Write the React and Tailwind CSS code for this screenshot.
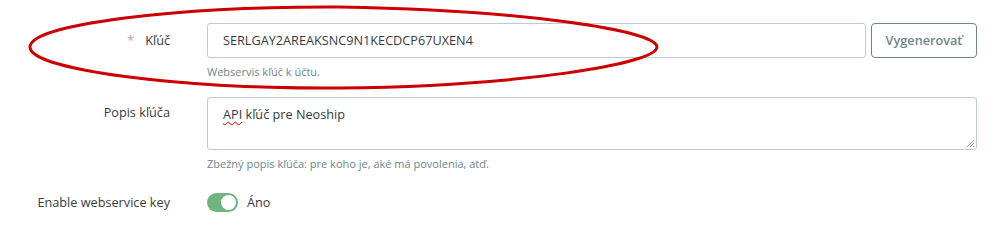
export default function App() {
  return (
    <div
      className="relative h-[226px] w-[1000px] overflow-hidden bg-white text-[12.7px] text-[#363a41]"
      style={{ fontFamily: '"Open Sans", "Noto Sans", sans-serif' }}
    >
      <div className="flex flex-col pt-[23px]">
        {/* Kľúč */}
        <div className="flex">
          <div className="flex h-[35px] w-[170px] items-center justify-end">
            <span className="mr-[11px] text-[#e08f95]">*</span>
            <span>Kľúč</span>
          </div>
          <div className="ml-[37px] w-[770px]">
            <div className="flex">
              <div className="flex h-[35px] flex-1 items-center rounded-[3px] border border-[#bbcdd2] px-[15px]">
                SERLGAY2AREAKSNC9N1KECDCP67UXEN4
              </div>
              <button className="ml-[5px] h-[35px] w-[106px] rounded-[4px] border border-[#6c868e] text-[12.7px] font-semibold text-[#6c868e]">
                Vygenerovať
              </button>
            </div>
            <div className="mt-[6px] text-[11px] text-[#6c868e]">Webservis kľúč k účtu.</div>
          </div>
        </div>

        {/* Popis kľúča */}
        <div className="mt-[16px] flex">
          <div className="flex w-[170px] justify-end pt-[6px]">Popis kľúča</div>
          <div className="ml-[37px] w-[770px]">
            <div className="relative h-[53px] rounded-[3px] border border-[#bbcdd2] px-[15px] pt-[7px]">
              <span className="underline decoration-[#d00] decoration-wavy decoration-1 underline-offset-2">API</span>{" "}
              kľúč pre Neoship
              <svg className="absolute bottom-[1px] right-[1px]" width="10" height="10" viewBox="0 0 10 10">
                <path d="M9 2L2 9M9 5L5 9M9 8L8 9" stroke="#999" strokeWidth="1" />
              </svg>
            </div>
            <div className="mt-[6px] text-[11px] text-[#6c868e]">
              Zbežný popis kľúča: pre koho je, aké má povolenia, atď.
            </div>
          </div>
        </div>

        {/* Enable webservice key */}
        <div className="mt-[21px] flex items-center">
          <div className="flex w-[170px] justify-end">Enable webservice key</div>
          <div className="ml-[37px] flex items-center gap-[9px]">
            <div className="flex h-[19px] w-[31px] items-center justify-end rounded-full bg-[#70b580] pr-[2px]">
              <div className="h-[15px] w-[15px] rounded-full bg-white" />
            </div>
            <span>Áno</span>
          </div>
        </div>
      </div>

      {/* red hand-drawn ellipse over the key field */}
      <svg className="absolute left-0 top-0" width="1000" height="226">
        <path
          d="M657 47 C656 30 520 10 340 7 C180 6 30 24 30 47 C30 70 180 89 340 88 C520 86 656 64 657 47 Z"
          fill="none"
          stroke="#cc0000"
          strokeWidth="3"
        />
      </svg>
    </div>
  );
}
